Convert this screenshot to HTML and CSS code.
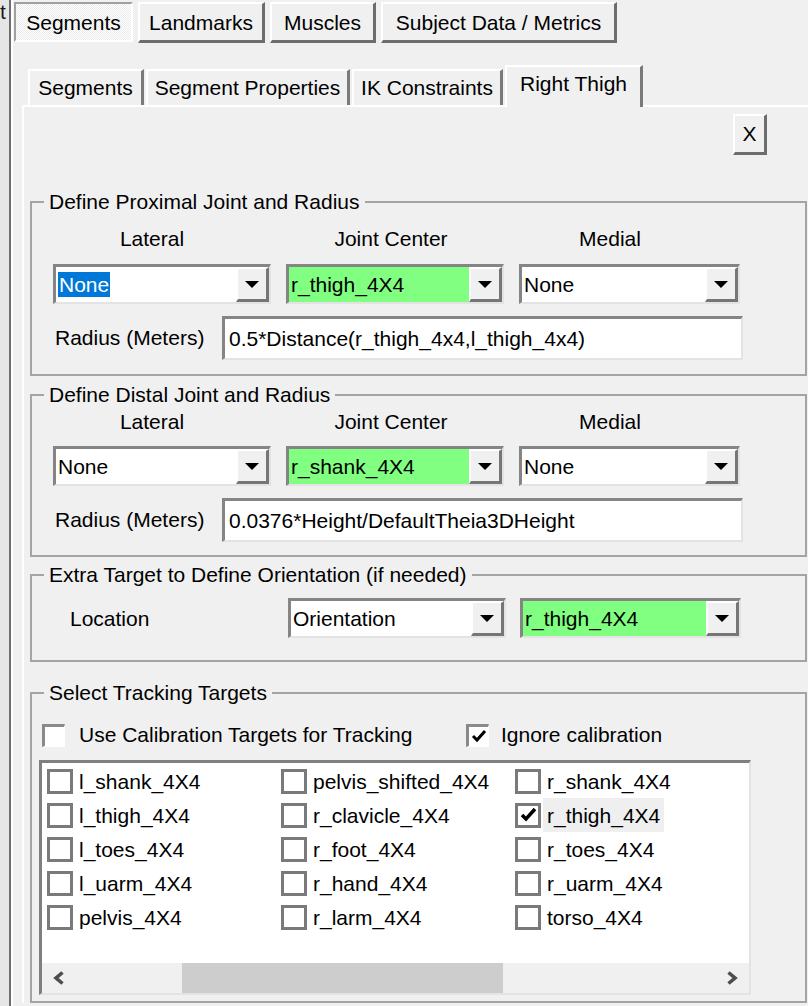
FILE: index.html
```html
<!DOCTYPE html>
<html lang="en">
<head>
  <meta charset="UTF-8">
  <title>Right Thigh</title>
  <link rel="stylesheet" href="styles.css">
</head>
<body>

<div class="gutter">t</div>
<div class="divider"></div>

<div class="window">
  <div class="tabs">
    <div class="tab tab-active tab-seg">Segments</div>
    <div class="tab tab-land">Landmarks</div>
    <div class="tab tab-mus">Muscles</div>
    <div class="tab tab-subj">Subject Data / Metrics</div>
  </div>

  <div class="subtabs">
    <div class="subtab sub-seg">Segments</div>
    <div class="subtab sub-props">Segment Properties</div>
    <div class="subtab sub-ik">IK Constraints</div>
    <div class="subtab subtab-active sub-thigh">Right Thigh</div>
  </div>

  <div class="panel">
    <div class="close-row">
      <div class="btn-close">X</div>
    </div>

    <!-- proximal -->
    <fieldset class="group group-prox">
      <legend>Define Proximal Joint and Radius</legend>
      <div class="group-body">
        <div class="col-labels">
          <span>Lateral</span><span>Joint Center</span><span>Medial</span>
        </div>
        <div class="combo-row">
          <div class="combo">
            <div class="combo-value"><span class="sel">None</span></div>
            <div class="combo-btn"><svg width="14" height="7" viewBox="0 0 14 7"><path d="M0 0h14L7 7z"/></svg></div>
          </div>
          <div class="combo">
            <div class="combo-value green">r_thigh_4X4</div>
            <div class="combo-btn"><svg width="14" height="7" viewBox="0 0 14 7"><path d="M0 0h14L7 7z"/></svg></div>
          </div>
          <div class="combo combo-wide">
            <div class="combo-value">None</div>
            <div class="combo-btn"><svg width="14" height="7" viewBox="0 0 14 7"><path d="M0 0h14L7 7z"/></svg></div>
          </div>
        </div>
        <div class="radius-row">
          <span class="radius-label">Radius (Meters)</span>
          <div class="textbox">0.5*Distance(r_thigh_4x4,l_thigh_4x4)</div>
        </div>
      </div>
    </fieldset>

    <!-- distal -->
    <fieldset class="group group-dist">
      <legend>Define Distal Joint and Radius</legend>
      <div class="group-body">
        <div class="col-labels">
          <span>Lateral</span><span>Joint Center</span><span>Medial</span>
        </div>
        <div class="combo-row">
          <div class="combo">
            <div class="combo-value">None</div>
            <div class="combo-btn"><svg width="14" height="7" viewBox="0 0 14 7"><path d="M0 0h14L7 7z"/></svg></div>
          </div>
          <div class="combo">
            <div class="combo-value green">r_shank_4X4</div>
            <div class="combo-btn"><svg width="14" height="7" viewBox="0 0 14 7"><path d="M0 0h14L7 7z"/></svg></div>
          </div>
          <div class="combo combo-wide">
            <div class="combo-value">None</div>
            <div class="combo-btn"><svg width="14" height="7" viewBox="0 0 14 7"><path d="M0 0h14L7 7z"/></svg></div>
          </div>
        </div>
        <div class="radius-row">
          <span class="radius-label">Radius (Meters)</span>
          <div class="textbox">0.0376*Height/DefaultTheia3DHeight</div>
        </div>
      </div>
    </fieldset>

    <!-- orientation -->
    <fieldset class="group group-orient">
      <legend>Extra Target to Define Orientation (if needed)</legend>
      <div class="group-body">
        <div class="location-row">
          <span class="location-label">Location</span>
          <div class="combo">
            <div class="combo-value">Orientation</div>
            <div class="combo-btn"><svg width="14" height="7" viewBox="0 0 14 7"><path d="M0 0h14L7 7z"/></svg></div>
          </div>
          <div class="combo combo-wide">
            <div class="combo-value green">r_thigh_4X4</div>
            <div class="combo-btn"><svg width="14" height="7" viewBox="0 0 14 7"><path d="M0 0h14L7 7z"/></svg></div>
          </div>
        </div>
      </div>
    </fieldset>

    <!-- tracking -->
    <fieldset class="group group-track">
      <legend>Select Tracking Targets</legend>
      <div class="group-body">
        <div class="check-row">
          <label class="opt opt-wide"><span class="check"></span>Use Calibration Targets for Tracking</label>
          <label class="opt"><span class="check"><svg width="16" height="16" viewBox="0 0 16 16"><path d="M2 8l4 4 8-9" fill="none" stroke="#000" stroke-width="3"/></svg></span>Ignore calibration</label>
        </div>

        <div class="listbox">
          <div class="items">
            <div class="item"><span class="box"></span><span>l_shank_4X4</span></div>
            <div class="item"><span class="box"></span><span>pelvis_shifted_4X4</span></div>
            <div class="item"><span class="box"></span><span>r_shank_4X4</span></div>
            <div class="item"><span class="box"></span><span>l_thigh_4X4</span></div>
            <div class="item"><span class="box"></span><span>r_clavicle_4X4</span></div>
            <div class="item item-focus"><span class="box"><svg width="19" height="19" viewBox="0 0 19 19"><path d="M3 9l4 4 9-10" fill="none" stroke="#000" stroke-width="3.5"/></svg></span><span>r_thigh_4X4</span></div>
            <div class="item"><span class="box"></span><span>l_toes_4X4</span></div>
            <div class="item"><span class="box"></span><span>r_foot_4X4</span></div>
            <div class="item"><span class="box"></span><span>r_toes_4X4</span></div>
            <div class="item"><span class="box"></span><span>l_uarm_4X4</span></div>
            <div class="item"><span class="box"></span><span>r_hand_4X4</span></div>
            <div class="item"><span class="box"></span><span>r_uarm_4X4</span></div>
            <div class="item"><span class="box"></span><span>pelvis_4X4</span></div>
            <div class="item"><span class="box"></span><span>r_larm_4X4</span></div>
            <div class="item"><span class="box"></span><span>torso_4X4</span></div>
          </div>
          <div class="hscroll">
            <div class="sb-arrow"><svg width="14" height="14" viewBox="0 0 14 14"><path d="M10.5 1.5L4 7l6.5 5.5" fill="none" stroke="#4d4d4d" stroke-width="3.6"/></svg></div>
            <div class="sb-track"><div class="sb-thumb"></div></div>
            <div class="sb-arrow"><svg width="14" height="14" viewBox="0 0 14 14"><path d="M3.5 1.5L10 7l-6.5 5.5" fill="none" stroke="#4d4d4d" stroke-width="3.6"/></svg></div>
          </div>
        </div>
      </div>
    </fieldset>
  </div>
</div>

</body>
</html>
```

FILE: styles.css
```css
* {
  box-sizing: border-box;
}

body {
  margin: 0;
  width: 808px;
  height: 1006px;
  overflow: hidden;
  display: flex;
  background: #f0f0f0;
  font-family: "Liberation Sans", Arial, sans-serif;
  font-size: 21px;
  color: #000;
}

.gutter {
  width: 9px;
  flex: none;
  background: #e6e6e6;
  line-height: 24px;
  overflow: hidden;
  color: #1a1a1a;
}

.divider {
  width: 4px;
  flex: none;
  background: #6d6d6d;
  border-right: 2px solid #fff;
}

.window {
  flex: 1;
  min-width: 0;
}

/* top tab buttons */
.tabs {
  display: flex;
  gap: 5px;
  height: 43px;
  padding: 2px 0 0 1px;
  align-items: flex-start;
}

.tab {
  height: 41px;
  display: flex;
  align-items: center;
  justify-content: center;
  padding-top: 2px;
  background: #f0f0f0;
  border-style: solid;
  border-width: 2px 3px 3px 2px;
  border-color: #fff #6d6d6d #6d6d6d #fff;
}

.tab-active {
  height: 40px;
  border-width: 2px;
  border-color: #a0a0a0 #fff #fff #a0a0a0;
  background: repeating-conic-gradient(#fff 0 25%, #ebebeb 0 50%) 0 0 / 2px 2px;
}

.tab-seg { width: 119px; }
.tab-land { width: 127px; }
.tab-mus { width: 106px; }
.tab-subj { width: 236px; }

/* inner tabs */
.subtabs {
  display: flex;
  gap: 2px;
  height: 40px;
  margin: 22px 0 0 15px;
  align-items: flex-end;
}

.subtab {
  height: 36px;
  display: flex;
  align-items: center;
  justify-content: center;
  background: #f0f0f0;
  border-style: solid;
  border-width: 2px 3px 0 2px;
  border-color: #fff #7a7a7a #fff #fff;
}

.subtab-active {
  position: relative;
  height: 42px;
  margin-bottom: -2px;
  padding-bottom: 6px;
}

.sub-seg { width: 116px; }
.sub-props { width: 204px; }
.sub-ik { width: 151px; }
.sub-thigh { width: 138px; }

.panel {
  width: 800px;
  margin-left: 9px;
  border-top: 2px solid #fff;
  border-left: 2px solid #fff;
  padding: 7px 0 0 6px;
}

.close-row {
  width: 777px;
  display: flex;
  justify-content: flex-end;
  padding-right: 40px;
}

.btn-close {
  width: 34px;
  height: 41px;
  display: flex;
  align-items: center;
  justify-content: center;
  border-style: solid;
  border-width: 2px 3px 3px 2px;
  border-color: #fff #6d6d6d #6d6d6d #fff;
}

/* group boxes */
.group {
  width: 777px;
  margin: 0;
  padding: 0;
  min-width: 0;
  border: 2px solid #a4a4a4;
}

.group legend {
  margin-left: 12px;
  padding: 0 5px;
  line-height: 24px;
}

.group-body {
  padding-left: 21px;
}

.group-prox { margin-top: 35px; }
.group-prox .group-body { padding-top: 13px; padding-bottom: 14px; }

.group-dist { margin-top: 7px; }
.group-dist .group-body { padding-top: 3px; padding-bottom: 13px; }

.group-orient { margin-top: 6px; }
.group-orient .group-body { padding-top: 11px; padding-bottom: 22px; }

.group-track { margin-top: 19px; }
.group-track .group-body { padding-top: 13px; padding-bottom: 6px; padding-left: 0; }

.col-labels {
  display: grid;
  grid-template-columns: 198px 280px 158px;
  text-align: center;
  line-height: 24px;
}

.combo-row {
  display: grid;
  grid-template-columns: 218px 218px 221px;
  column-gap: 15px;
  margin-top: 13px;
}

.group-dist .combo-row { margin-top: 12px; }

.combo {
  height: 40px;
  display: flex;
  background: #fff;
  border-style: solid;
  border-width: 3px 2px 2px 3px;
  border-color: #858585 #e3e3e3 #e3e3e3 #858585;
}

.combo-value {
  flex: 1;
  display: flex;
  align-items: center;
  padding-left: 2px;
  white-space: nowrap;
}

.combo-value.green {
  background: #80ff80;
}

.sel {
  background: #0078d7;
  color: #fff;
  line-height: 25px;
  padding: 0 1px;
}

.combo-btn {
  width: 33px;
  display: flex;
  align-items: center;
  justify-content: center;
  background: #f0f0f0;
  border-style: solid;
  border-width: 2px 3px 3px 2px;
  border-color: #fff #767676 #767676 #fff;
}

.radius-row {
  display: flex;
  align-items: center;
  margin-top: 12px;
}

.radius-label {
  width: 169px;
  padding-left: 2px;
}

.textbox {
  width: 521px;
  height: 44px;
  display: flex;
  align-items: center;
  padding-left: 4px;
  background: #fff;
  border-style: solid;
  border-width: 3px 2px 2px 3px;
  border-color: #858585 #e3e3e3 #e3e3e3 #858585;
  white-space: nowrap;
}

.location-row {
  display: flex;
  align-items: center;
  gap: 14px;
}

.location-label {
  width: 221px;
  padding: 2px 0 0 17px;
}

.location-row .combo { width: 218px; }
.location-row .combo-wide { width: 221px; }

/* tracking targets */
.check-row {
  height: 32px;
  display: flex;
  align-items: center;
  padding: 2px 0 0 10px;
}

.opt {
  display: flex;
  align-items: center;
  gap: 14px;
}

.opt-wide { width: 424px; }

.opt + .opt { gap: 12px; }

.check {
  width: 23px;
  height: 23px;
  display: flex;
  align-items: center;
  justify-content: center;
  background: #fff;
  border-style: solid;
  border-width: 3px 1px 1px 3px;
  border-color: #8a8a8a #fff #fff #8a8a8a;
}

.listbox {
  width: 712px;
  height: 235px;
  margin: 10px 0 0 7px;
  display: flex;
  flex-direction: column;
  background: #fff;
  border-style: solid;
  border-width: 3px 2px 2px 3px;
  border-color: #7f7f7f #e3e3e3 #e3e3e3 #7f7f7f;
}

.items {
  flex: 1;
  display: grid;
  grid-template-columns: repeat(3, 234px);
  grid-auto-rows: 34px;
  align-content: start;
  padding: 1px 0 0 5px;
}

.item {
  display: flex;
  align-items: center;
  gap: 2px;
  white-space: nowrap;
}

.item span + span {
  padding: 2px 4px 0;
  line-height: 32px;
}

.item-focus span + span {
  background: #efefef;
}

.box {
  width: 26px;
  height: 25px;
  display: flex;
  align-items: center;
  justify-content: center;
  background: #fff;
  border: 3px solid #7a7a7a;
}

.hscroll {
  height: 30px;
  display: flex;
  background: #f0f0f0;
}

.sb-arrow {
  width: 34px;
  display: flex;
  align-items: center;
  justify-content: center;
}

.sb-track {
  flex: 1;
}

.sb-thumb {
  width: 321px;
  height: 100%;
  margin-left: 106px;
  background: #cdcdcd;
}
```
